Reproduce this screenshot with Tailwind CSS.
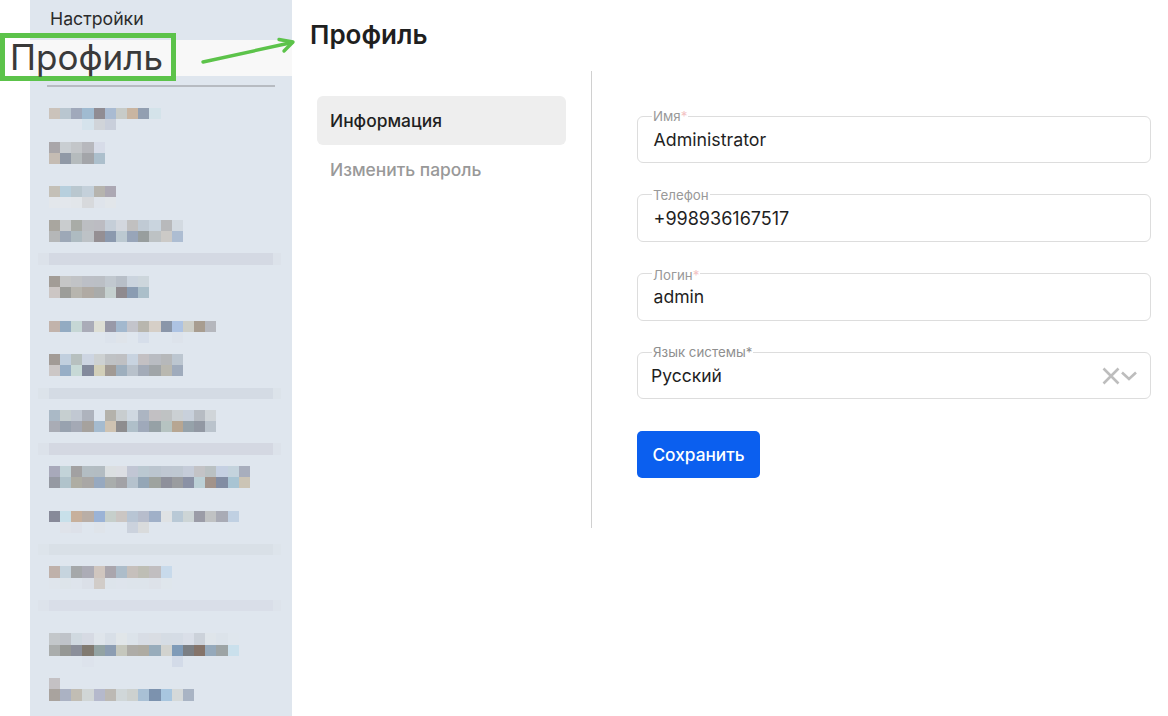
<!DOCTYPE html>
<html lang="ru">
<head>
<meta charset="utf-8">
<title>Профиль</title>
<script src="https://cdn.jsdelivr.net/npm/@tailwindcss/browser@4"></script>
</head>
<body class="bg-white">
<div class="relative flex w-[1168px] h-[716px] overflow-hidden bg-white font-['Inter',sans-serif] text-[#1f1f1f]">
  <aside class="ml-[30px] w-[262px] h-full shrink-0 bg-[#dfe6ee] flex flex-col [&_i]:block [&_i]:w-[11.17px] [&_i]:h-[11px] [&_i]:shrink-0 [&_b]:flex [&_b]:pl-[19px]">
    <div class="h-[40px] pl-[20px] pt-[9px] text-[17.7px] leading-[20px] text-[#2b2b2b]">Настройки</div>
    <div class="h-[36px] bg-[#f8f8f8]"></div>
    <div class="mt-[9px] mx-[17px] h-[2px] bg-[#b7bbc1]"></div>

    <b class="mt-[21px]"><i class="bg-[#cbc3bb]"></i><i class="bg-[#b9c6d0]"></i><i class="bg-[#a0a9bb]"></i><i class="bg-[#a0bbd1]"></i><i class="bg-[#908c93]"></i><i class="bg-[#a9bbd2]"></i><i class="bg-[#c7cbc8]"></i><i class="bg-[#c9b5a1]"></i><i class="bg-[#929fb1]"></i><i class="bg-[#d4e3ea]"></i></b>
    <b><i></i><i></i><i></i><i class="bg-[#d5e3ec]"></i><i class="bg-[#d0d4d9]"></i><i class="bg-[#c9cfdb]"></i></b>

    <b class="mt-[12px]"><i class="bg-[#a9a6a9]"></i><i class="bg-[#c9ced2]"></i><i class="bg-[#c3c6c9]"></i><i class="bg-[#b7b8bd]"></i><i class="bg-[#d7dce8]"></i></b>
    <b><i class="bg-[#c5bcb3]"></i><i class="bg-[#9099a6]"></i><i class="bg-[#b5bbbd]"></i><i class="bg-[#a3a5a9]"></i><i class="bg-[#acbfcc]"></i></b>

    <b class="mt-[22px]"><i class="bg-[#c4c0b7]"></i><i class="bg-[#b7cfdd]"></i><i class="bg-[#b9c7cf]"></i><i class="bg-[#c4d0da]"></i><i class="bg-[#b6b4ae]"></i><i class="bg-[#aca8b3]"></i></b>
    <b><i class="bg-[#e3e7eb]"></i><i class="bg-[#e3e7ec]"></i><i class="bg-[#e2e6ea]"></i><i class="bg-[#d7d9dc]"></i><i class="bg-[#dfe4eb]"></i><i class="bg-[#e2e6ea]"></i></b>

    <b class="mt-[12px]"><i class="bg-[#a9a69f]"></i><i class="bg-[#c9ccce]"></i><i class="bg-[#a9aca7]"></i><i class="bg-[#bcbec2]"></i><i class="bg-[#bcbcc2]"></i><i class="bg-[#c5ced8]"></i><i class="bg-[#d3d7de]"></i><i class="bg-[#c1c0c0]"></i><i class="bg-[#c0cad4]"></i><i class="bg-[#c9d4de]"></i><i class="bg-[#b8b9bb]"></i><i class="bg-[#d3dae1]"></i></b>
    <b><i class="bg-[#b5b7b8]"></i><i class="bg-[#9da8b7]"></i><i class="bg-[#aebbc1]"></i><i class="bg-[#bdc2c6]"></i><i class="bg-[#958f93]"></i><i class="bg-[#8b99ae]"></i><i class="bg-[#bcc9d1]"></i><i class="bg-[#98a5b9]"></i><i class="bg-[#989e9e]"></i><i class="bg-[#bdc2c4]"></i><i class="bg-[#cccac7]"></i><i class="bg-[#adbdd2]"></i></b>

    <div class="mt-[11px] ml-[8px] mr-[11px] h-[12px] pl-[11px] pr-[8px] bg-[#dce2ea]"><div class="h-full bg-[#d4d9e3]"></div></div>

    <b class="mt-[11px]"><i class="bg-[#a29c96]"></i><i class="bg-[#c5c6c6]"></i><i class="bg-[#c1c3c6]"></i><i class="bg-[#bcbfc6]"></i><i class="bg-[#bbbfc5]"></i><i class="bg-[#c1c8cf]"></i><i class="bg-[#b8bfc8]"></i><i class="bg-[#cbd4de]"></i><i class="bg-[#cdd6dc]"></i></b>
    <b><i class="bg-[#ccc6c4]"></i><i class="bg-[#9c9d99]"></i><i class="bg-[#b7b5ae]"></i><i class="bg-[#b0aaa3]"></i><i class="bg-[#a9abaa]"></i><i class="bg-[#c5d0cf]"></i><i class="bg-[#8f8a8e]"></i><i class="bg-[#8a9cb2]"></i><i class="bg-[#abbfca]"></i></b>

    <b class="mt-[23px]"><i class="bg-[#c2b3ab]"></i><i class="bg-[#93abc2]"></i><i class="bg-[#c6d7d5]"></i><i class="bg-[#aaacb8]"></i><i class="bg-[#dedfd5]"></i><i class="bg-[#9899a8]"></i><i class="bg-[#a2b8ce]"></i><i class="bg-[#c3c4cb]"></i><i class="bg-[#b8b6ae]"></i><i class="bg-[#d6cfc7]"></i><i class="bg-[#8a96a9]"></i><i class="bg-[#adc3e3]"></i><i class="bg-[#cdcec7]"></i><i class="bg-[#a89d90]"></i><i class="bg-[#b5b7bd]"></i></b>
    <b><i></i><i></i><i></i><i></i><i></i><i class="bg-[#dce3ec]"></i><i class="bg-[#dfe4ea]"></i><i></i><i class="bg-[#d6deea]"></i><i></i><i></i><i class="bg-[#dde3eb]"></i></b>

    <b class="mt-[11px]"><i class="bg-[#a29b96]"></i><i class="bg-[#c1cfde]"></i><i class="bg-[#b7c0bf]"></i><i class="bg-[#cdd5e2]"></i><i class="bg-[#cdd1d2]"></i><i class="bg-[#bfc2c5]"></i><i class="bg-[#bfc0c3]"></i><i class="bg-[#c8d3e0]"></i><i class="bg-[#c3c0c3]"></i><i class="bg-[#b9bcc2]"></i><i class="bg-[#b6b8ba]"></i><i class="bg-[#bcc6d0]"></i></b>
    <b><i class="bg-[#ccc7c6]"></i><i class="bg-[#97aec6]"></i><i class="bg-[#c7d9d6]"></i><i class="bg-[#838a9c]"></i><i class="bg-[#d2cfb9]"></i><i class="bg-[#a19a94]"></i><i class="bg-[#9eafbe]"></i><i class="bg-[#b8c1cb]"></i><i class="bg-[#a3abb8]"></i><i class="bg-[#a0a5a8]"></i><i class="bg-[#b9b8b0]"></i><i class="bg-[#9fabbc]"></i></b>

    <div class="mt-[12px] ml-[8px] mr-[11px] h-[11px] pl-[11px] pr-[8px] bg-[#dce3ea]"><div class="h-full bg-[#d4dbe4]"></div></div>

    <b class="mt-[11px]"><i class="bg-[#aab9c6]"></i><i class="bg-[#c6cfd0]"></i><i class="bg-[#c1c8d2]"></i><i class="bg-[#aeb3bd]"></i><i class="bg-[#dde5ee]"></i><i class="bg-[#b4b2ab]"></i><i class="bg-[#c8cdcf]"></i><i class="bg-[#cfd8e1]"></i><i class="bg-[#acb5c2]"></i><i class="bg-[#c2c0c3]"></i><i class="bg-[#bfc2c3]"></i><i class="bg-[#cbd0d3]"></i><i class="bg-[#c8d0db]"></i><i class="bg-[#b7bcc3]"></i><i class="bg-[#d0d5d9]"></i></b>
    <b><i class="bg-[#a9acb5]"></i><i class="bg-[#98a2af]"></i><i class="bg-[#a4a9b5]"></i><i class="bg-[#a6a29e]"></i><i class="bg-[#a5bbcf]"></i><i class="bg-[#cfc3b2]"></i><i class="bg-[#8e8d8f]"></i><i class="bg-[#afbfc9]"></i><i class="bg-[#9fa9ba]"></i><i class="bg-[#96a1a6]"></i><i class="bg-[#b6c3c1]"></i><i class="bg-[#b7a692]"></i><i class="bg-[#96a2aa]"></i><i class="bg-[#9298a3]"></i><i class="bg-[#bac3cc]"></i></b>

    <div class="mt-[11px] ml-[8px] mr-[11px] h-[12px] pl-[11px] pr-[8px] bg-[#dce2ea]"><div class="h-full bg-[#d4d8e2]"></div></div>

    <b class="mt-[11px]"><i class="bg-[#a8a9ba]"></i><i class="bg-[#c2d3d8]"></i><i class="bg-[#a2a1a2]"></i><i class="bg-[#b3bdc3]"></i><i class="bg-[#b3bcc2]"></i><i class="bg-[#dbdfe1]"></i><i class="bg-[#dcdee3]"></i><i class="bg-[#c1c6d4]"></i><i class="bg-[#bac8d1]"></i><i class="bg-[#bbc5cf]"></i><i class="bg-[#bfc7d2]"></i><i class="bg-[#bfc8d2]"></i><i class="bg-[#c5ccd9]"></i><i class="bg-[#c3c3c6]"></i><i class="bg-[#bac1c3]"></i><i class="bg-[#c5d0e2]"></i><i class="bg-[#c4d3dd]"></i><i class="bg-[#a8aebd]"></i></b>
    <b><i class="bg-[#9599a2]"></i><i class="bg-[#b0c3cb]"></i><i class="bg-[#aeada3]"></i><i class="bg-[#a9a7a5]"></i><i class="bg-[#97a9c0]"></i><i class="bg-[#a9adac]"></i><i class="bg-[#a2a2a6]"></i><i class="bg-[#b5c2cd]"></i><i class="bg-[#94a6b6]"></i><i class="bg-[#9ea39f]"></i><i class="bg-[#8e909b]"></i><i class="bg-[#9a9c9f]"></i><i class="bg-[#8a91a5]"></i><i class="bg-[#bcd0d6]"></i><i class="bg-[#a2938a]"></i><i class="bg-[#828da3]"></i><i class="bg-[#a8c4d3]"></i><i class="bg-[#cbc4b5]"></i></b>

    <b class="mt-[23px]"><i class="bg-[#878a99]"></i><i class="bg-[#c8e0ea]"></i><i class="bg-[#c7b09c]"></i><i class="bg-[#b9aea6]"></i><i class="bg-[#9bb3d6]"></i><i class="bg-[#c6cfcb]"></i><i class="bg-[#cbc6c3]"></i><i class="bg-[#b8c5d4]"></i><i class="bg-[#b7bdcc]"></i><i class="bg-[#a0b0c8]"></i><i class="bg-[#dfe2e4]"></i><i class="bg-[#b9c9d6]"></i><i class="bg-[#cdd5d6]"></i><i class="bg-[#9b9ca7]"></i><i class="bg-[#c0c2c3]"></i><i class="bg-[#a9abb5]"></i><i class="bg-[#c0d0e2]"></i></b>
    <b><i></i><i class="bg-[#dfe3ea]"></i><i class="bg-[#dde1e9]"></i><i></i><i class="bg-[#dfe4ea]"></i><i></i><i></i><i class="bg-[#cbd2dd]"></i><i class="bg-[#d9dbdc]"></i></b>

    <div class="mt-[11px] ml-[8px] mr-[11px] h-[11px] pl-[11px] pr-[8px] bg-[#dde4eb]"><div class="h-full bg-[#d9e0e7]"></div></div>

    <b class="mt-[11px] [&_i]:h-[12px]"><i class="bg-[#bfb1aa]"></i><i class="bg-[#c6d4de]"></i><i class="bg-[#a5a8aa]"></i><i class="bg-[#acacb6]"></i><i class="bg-[#d0c6bf]"></i><i class="bg-[#aaa6ad]"></i><i class="bg-[#adbdca]"></i><i class="bg-[#c6c0bc]"></i><i class="bg-[#bebeb5]"></i><i class="bg-[#c1bec0]"></i><i class="bg-[#c8daeb]"></i></b>
    <b><i class="bg-[#dfe5ec]"></i><i class="bg-[#dde4ea]"></i><i class="bg-[#dee4ec]"></i><i class="bg-[#dbe0e8]"></i><i class="bg-[#d1ccc8]"></i><i class="bg-[#dde4eb]"></i><i class="bg-[#dee4ec]"></i><i class="bg-[#dde4eb]"></i><i class="bg-[#dde4eb]"></i><i class="bg-[#dde2e9]"></i><i class="bg-[#dfe6ec]"></i></b>

    <div class="mt-[11px] ml-[8px] mr-[11px] h-[11px] pl-[11px] pr-[8px] bg-[#dde3eb]"><div class="h-full bg-[#d9dee8]"></div></div>

    <b class="mt-[22px] [&_i]:h-[12px]"><i class="bg-[#c3c7ca]"></i><i class="bg-[#bfc3c9]"></i><i class="bg-[#d0d9e0]"></i><i class="bg-[#d6dae3]"></i><i class="bg-[#dfe5eb]"></i><i class="bg-[#d8dfe7]"></i><i class="bg-[#e1e6e9]"></i><i class="bg-[#dce3ea]"></i><i class="bg-[#d8dde5]"></i><i class="bg-[#d9dde3]"></i><i class="bg-[#d5dce4]"></i><i class="bg-[#d5dce5]"></i><i class="bg-[#dadfe8]"></i><i class="bg-[#ccd2da]"></i><i class="bg-[#dfe5ea]"></i><i class="bg-[#dce3ea]"></i><i class="bg-[#dfe6ed]"></i></b>
    <b><i class="bg-[#aaadac]"></i><i class="bg-[#959794]"></i><i class="bg-[#8b8f9a]"></i><i class="bg-[#817a71]"></i><i class="bg-[#93a3a3]"></i><i class="bg-[#8c9db2]"></i><i class="bg-[#c5c7bd]"></i><i class="bg-[#aeaca7]"></i><i class="bg-[#aeaba2]"></i><i class="bg-[#98acbb]"></i><i class="bg-[#d2d3cf]"></i><i class="bg-[#7f9bb8]"></i><i class="bg-[#7b7f84]"></i><i class="bg-[#85746a]"></i><i class="bg-[#95a9bb]"></i><i class="bg-[#9da4a5]"></i><i class="bg-[#cae0ec]"></i></b>
    <b><i></i><i></i><i></i><i class="bg-[#dde3ec]"></i><i></i><i></i><i></i><i></i><i></i><i></i><i></i><i class="bg-[#d3dbe8]"></i></b>

    <b class="mt-[11px]"><i class="bg-[#c4c1c4]"></i></b>
    <b class="[&_i]:h-[12px]"><i class="bg-[#a9a39e]"></i><i class="bg-[#abb2c3]"></i><i class="bg-[#c1bdb4]"></i><i class="bg-[#d1d6d6]"></i><i class="bg-[#b5b9cc]"></i><i class="bg-[#bcb9b4]"></i><i class="bg-[#d0d7d9]"></i><i class="bg-[#cdd1cf]"></i><i class="bg-[#a9c0d5]"></i><i class="bg-[#7c92ae]"></i><i class="bg-[#a8c6df]"></i><i class="bg-[#d5d9d9]"></i><i class="bg-[#a9b4c4]"></i></b>
  </aside>

  <main class="flex-1 min-w-0">
    <h1 class="ml-[18px] mt-[19px] h-[31px] text-[26px] leading-[31px] font-semibold text-[#1f1f1f]">Профиль</h1>
    <div class="mt-[21px] flex">
      <nav class="ml-[25px] mt-[25px] w-[249px] shrink-0 flex flex-col">
        <a class="h-[49px] rounded-[6px] bg-[#eeeeee] pl-[13px] pt-[1px] flex items-center text-[17.4px] font-medium text-[#1f1f1f]">Информация</a>
        <a class="h-[49px] pl-[13px] pt-[1px] flex items-center text-[17.4px] font-medium text-[#999999]">Изменить пароль</a>
      </nav>
      <div class="ml-[25px] w-px h-[457px] bg-[#d0d0d0] shrink-0"></div>
      <form class="ml-[45px] w-[514px] pt-[45px] flex flex-col">
        <div class="relative h-[47px] rounded-[6px] border border-[#dddddd] pl-[15.5px] flex items-center text-[17.8px]">
          <span class="absolute left-[14px] -top-[8px] bg-white px-px text-[13.3px] leading-[14px] text-[#999999]">Имя<span class="text-[#f3c4c4]">*</span></span>
          <span class="pt-[2px]">Administrator</span>
        </div>
        <div class="relative mt-[31px] h-[48px] rounded-[6px] border border-[#dddddd] pl-[15.5px] flex items-center text-[18px]">
          <span class="absolute left-[14px] -top-[7px] bg-white px-px text-[13.3px] leading-[14px] text-[#999999]">Телефон</span>
          <span class="pt-[1px]">+998936167517</span>
        </div>
        <div class="relative mt-[31px] h-[48px] rounded-[6px] border border-[#dddddd] pl-[15.5px] flex items-center text-[17.6px]">
          <span class="absolute left-[14px] -top-[6px] bg-white px-px text-[13.3px] leading-[14px] text-[#999999]">Логин<span class="text-[#f3c4c4]">*</span></span>
          <span class="pt-[1px]">admin</span>
        </div>
        <div class="relative mt-[31px] h-[47px] rounded-[6px] border border-[#dddddd] pl-[13px] pr-[12px] flex items-center text-[17.5px]">
          <span class="absolute left-[14px] -top-[8px] bg-white px-px text-[13.3px] leading-[14px] text-[#8f8f8f]">Язык системы*</span>
          <span class="pt-[2px]">Русский</span>
          <svg class="ml-auto" width="36" height="18" viewBox="0 0 36 18" fill="none" stroke="#bdbdbd" stroke-width="2.6">
            <path d="M1.5 1.5 L16.5 16.5 M16.5 1.5 L1.5 16.5"/>
            <path d="M20 5.5 L27 12 L34 5.5"/>
          </svg>
        </div>
        <button type="button" class="mt-[32px] w-[123px] h-[47px] rounded-[5px] bg-[#0b5fef] text-white text-[17.3px] font-medium">Сохранить</button>
      </form>
    </div>
  </main>

  <div class="absolute left-0 top-[33px] w-[176px] h-[48px] border-[5px] border-[#5cc34a] flex items-center pl-[5px] text-[35px] leading-none text-[#3a3a3a]">
    Профиль
  </div>
  <svg class="absolute left-[196px] top-[32px]" width="104" height="36" viewBox="196 32 104 36" fill="none" stroke="#5cc34a" stroke-width="3.4" stroke-linecap="round" stroke-linejoin="round">
    <path d="M203 62 L292 42.5"/>
    <path d="M279 39.5 L293 42 L284 51"/>
  </svg>
</div>
</body>
</html>
